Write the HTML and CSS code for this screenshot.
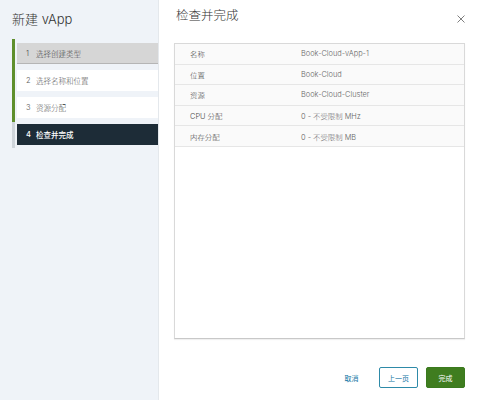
FILE: index.html
```html
<!DOCTYPE html>
<html lang="zh">
<head>
<meta charset="utf-8">
<title>新建 vApp</title>
<link rel="stylesheet" href="styles.css">
</head>
<body>
<div class="app">
  <aside class="sidebar">
    <h1 class="title">新建 vApp</h1>
    <div class="steps">
      <div class="track"><div class="track-done"></div><div class="track-todo"></div></div>
      <ol class="step-list">
        <li class="step step-past"><span class="num">1</span><span class="label">选择创建类型</span></li>
        <li class="step"><span class="num">2</span><span class="label">选择名称和位置</span></li>
        <li class="step"><span class="num">3</span><span class="label">资源分配</span></li>
        <li class="step step-current"><span class="num">4</span><span class="label">检查并完成</span></li>
      </ol>
    </div>
  </aside>
  <main class="content">
    <header class="header">
      <h2 class="page-title">检查并完成</h2>
      <button class="close" aria-label="关闭"><svg width="8" height="8" viewBox="0 0 8 8"><path d="M0.5 0.5 L7.5 7.5 M7.5 0.5 L0.5 7.5" stroke="#6f6f6f" stroke-width="0.9" fill="none"/></svg></button>
    </header>
    <section class="summary">
      <div class="row"><span class="key">名称</span><span class="val">Book-Cloud-vApp-1</span></div>
      <div class="row"><span class="key">位置</span><span class="val">Book-Cloud</span></div>
      <div class="row"><span class="key">资源</span><span class="val">Book-Cloud-Cluster</span></div>
      <div class="row"><span class="key">CPU 分配</span><span class="val">0 - 不受限制 MHz</span></div>
      <div class="row"><span class="key">内存分配</span><span class="val">0 - 不受限制 MB</span></div>
    </section>
    <footer class="footer">
      <button class="btn btn-link">取消</button>
      <button class="btn btn-outline">上一页</button>
      <button class="btn btn-primary">完成</button>
    </footer>
  </main>
</div>
</body>
</html>
```
FILE: styles.css
```css
* { box-sizing: border-box; }
html, body { margin: 0; padding: 0; }
body {
  font-family: Inter, "Noto Sans CJK SC", sans-serif;
  color: #333;
  background: #fff;
}
.app {
  display: flex;
  width: 479px;
  height: 400px;
}
.sidebar {
  width: 159px;
  flex: none;
  background: #eff3f8;
  border-right: 1px solid #e4e8ec;
  padding-top: 11px;
}
.title {
  margin: 0 0 12px 12px;
  font-size: 13px;
  line-height: 16px;
  font-weight: 300;
  color: #333;
}
.steps {
  display: flex;
  margin-left: 12px;
  height: 109px;
}
.track {
  width: 2.5px;
  display: flex;
  flex-direction: column;
}
.track-done { height: 83px; background: #5f8f2c; }
.track-todo { flex: 1; background: #cfd5db; }
.step-list {
  list-style: none;
  margin: 0;
  padding: 4px 0 0 2.5px;
  flex: 1;
  display: flex;
  flex-direction: column;
  gap: 6px;
}
.step {
  height: 21px;
  display: flex;
  align-items: center;
  padding-left: 9px;
  background: #fff;
  font-size: 7.5px;
  font-weight: 300;
  color: #555;
}
.step .num { width: 10px; }
.step-past {
  background: #d6d6d6;
  border-bottom: 1px solid #b5b5b5;
  color: #444;
}
.step-current {
  background: #1d2c37;
  color: #fff;
  font-weight: 500;
}
.content {
  flex: 1;
  display: flex;
  flex-direction: column;
  padding: 0 14px 0 15px;
}
.header {
  height: 43px;
  display: flex;
  justify-content: space-between;
  align-items: flex-start;
  padding-top: 8px;
}
.page-title {
  margin: 0 0 0 2px;
  font-size: 12.5px;
  line-height: 16px;
  font-weight: 300;
  color: #333;
}
.close {
  border: 0;
  background: none;
  padding: 0;
  margin: 7px 0 0 0;
  width: 8px;
  height: 8px;
  display: flex;
}
.summary {
  height: 296px;
  border: 1px solid #d9d9d9;
  border-bottom-color: #c8c8c8;
  box-shadow: 0 1px 1px rgba(0,0,0,0.06);
  background: #fff;
}
.row {
  height: 20.6px;
  display: flex;
  align-items: center;
  padding-left: 15px;
  background: #fafafa;
  border-bottom: 1px solid #e6e6e6;
  font-size: 7.4px;
  font-weight: 300;
}
.key { width: 111px; color: #444; }
.val { color: #666; }
.footer {
  margin-top: 28px;
  display: flex;
  justify-content: flex-end;
  gap: 8px;
}
.btn {
  font-family: inherit;
  font-size: 7px;
  width: 39px;
  height: 21px;
  padding: 0;
  border-radius: 2px;
  cursor: pointer;
}
.btn-link {
  border: 0;
  background: none;
  color: #0d73a3;
}
.btn-outline {
  border: 1px solid #2e8aa8;
  background: #fff;
  color: #0d73a3;
}
.btn-primary {
  border: 1px solid #3a7a1e;
  background: #3f7d1f;
  color: #fff;
}
```
